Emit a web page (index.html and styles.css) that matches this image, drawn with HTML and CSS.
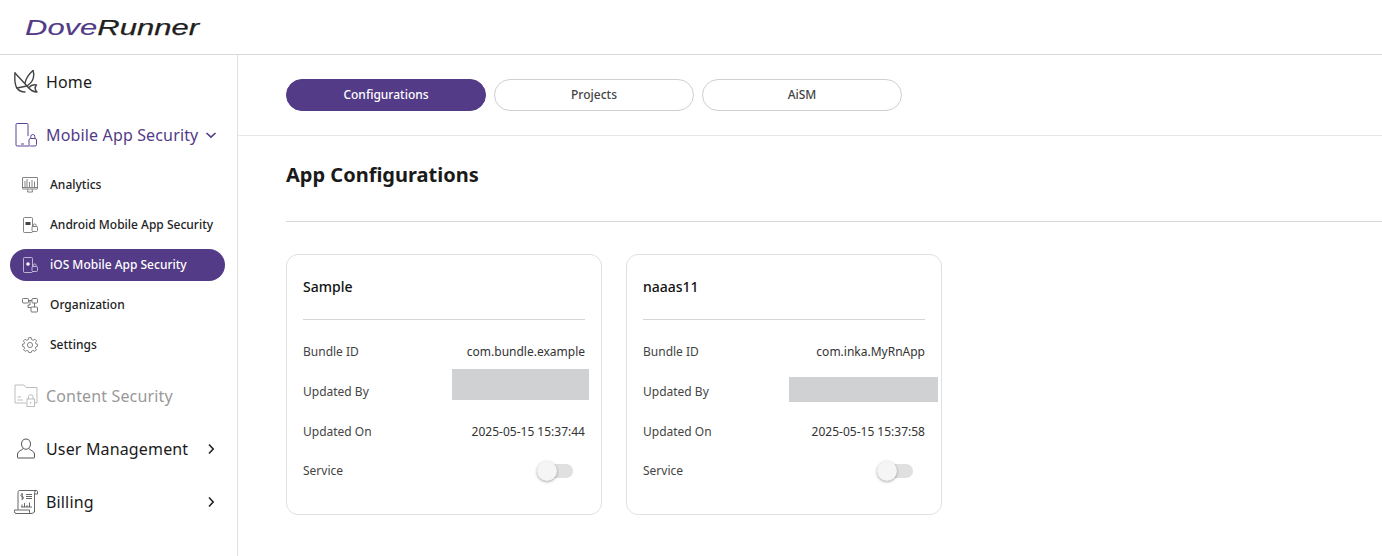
FILE: index.html
```html
<!DOCTYPE html>
<html lang="en">

<head>
  <meta charset="UTF-8" />
  <meta name="viewport" content="width=device-width, initial-scale=1.0" />
  <title>App Configurations</title>
  <link rel="stylesheet" href="styles.css">
</head>

<body>
  <header class="topbar">
    <svg class="logo" width="176" height="24" viewBox="0 0 176 24">
      <text x="0" y="19" textLength="174" lengthAdjust="spacingAndGlyphs" class="logo-text"><tspan class="logo-dove">Dove</tspan><tspan class="logo-runner">Runner</tspan></text>
    </svg>
  </header>

  <div class="layout">
    <nav class="sidebar">
      <a class="nav-item" href="javascript:;">
        <svg class="nav-icon" width="24" height="24" viewBox="0 0 24 24" fill="none" stroke="#444" stroke-width="1.4" stroke-linejoin="round" stroke-linecap="round">
          <path d="M1 3 C0.5 9 1 15 3 18 C5 21 8 22 11 22" />
          <path d="M1 3 L13 16" />
          <path d="M19 0.5 C15 4 12 8 11 13" />
          <path d="M19 0.5 C21 7 19 12 13 16 L3 18" />
          <path d="M13 16 C16 20 19 22 23 22 C21 20 20 18 22.5 15 C19 14 17 15 15 17.5" />
        </svg>
        <span>Home</span>
      </a>

      <a class="nav-item open" href="javascript:;">
        <svg class="nav-icon" width="24" height="24" viewBox="0 0 24 24" fill="none" stroke="#5d4596" stroke-width="1">
          <path d="M14 13 V1.5 Q14 0.5 13 0.5 H3 Q2 0.5 2 1.5 V22 Q2 23 3 23 H15" />
          <path d="M7 21 H10" />
          <rect x="15" y="15.5" width="7.5" height="7.5" rx="1.5" />
          <path d="M16.8 15.5 V13.5 A2 2 0 0 1 20.8 13.5 V15.5" />
        </svg>
        <span>Mobile App Security</span>
        <svg class="chevron" width="12" height="12" viewBox="0 0 12 12" fill="none" stroke="#533b87" stroke-width="1.6"><path d="M1.5 4 L6 8.2 L10.5 4" /></svg>
      </a>

      <ul class="sub-nav">
        <li>
          <a class="sub-item" href="javascript:;">
            <svg width="16" height="16" viewBox="0 0 16 16" fill="none" stroke="#666" stroke-width="0.8">
              <rect x="0.5" y="0.5" width="15" height="11.5" rx="0.5" />
              <path d="M3 10 V4 M5 10 V2 M7.5 10 V5 M10 10 V3 M12.5 10 V4.5 M0.5 10.5 H15.5 M6 12 L5.5 15 H10.5 L10 12" />
            </svg>
            Analytics
          </a>
        </li>
        <li>
          <a class="sub-item" href="javascript:;">
            <svg width="16" height="16" viewBox="0 0 16 16" fill="none" stroke="#666" stroke-width="0.8">
              <rect x="1.5" y="0.5" width="9" height="15" rx="1" />
              <rect x="3.5" y="5" width="5" height="3" fill="#444" stroke="none" />
              <rect x="10" y="9.5" width="5.5" height="5" rx="1" fill="#fff" />
              <path d="M11.3 9.5 V8.3 A1.4 1.4 0 0 1 14.1 8.3 V9.5" />
            </svg>
            Android Mobile App Security
          </a>
        </li>
        <li>
          <a class="sub-item active" href="javascript:;">
            <svg width="16" height="16" viewBox="0 0 16 16" fill="none" stroke="#d8d2e6" stroke-width="0.8">
              <rect x="1.5" y="0.5" width="9" height="15" rx="1" />
              <circle cx="6" cy="7" r="1.8" fill="#fff" stroke="none" />
              <rect x="10" y="9.5" width="5.5" height="5" rx="1" fill="#533b87" />
              <path d="M11.3 9.5 V8.3 A1.4 1.4 0 0 1 14.1 8.3 V9.5" />
            </svg>
            iOS Mobile App Security
          </a>
        </li>
        <li>
          <a class="sub-item" href="javascript:;">
            <svg width="16" height="16" viewBox="0 0 16 16" fill="none" stroke="#666" stroke-width="0.9">
              <rect x="0.5" y="1.5" width="6" height="4.5" rx="0.8" />
              <rect x="10" y="1.5" width="5.5" height="4.5" rx="0.8" />
              <rect x="9" y="10" width="6.5" height="5" rx="0.8" />
              <path d="M6.5 3.5 H10 M8 3.5 V8 H6 V10.5 H9 M12.5 6 V10" />
            </svg>
            Organization
          </a>
        </li>
        <li>
          <a class="sub-item" href="javascript:;">
            <svg width="16" height="16" viewBox="0 0 16 16" fill="none" stroke="#666" stroke-width="0.8" stroke-linejoin="round">
              <circle cx="8" cy="8" r="2.6" />
              <path d="M6.8 0.6 H9.2 L9.6 2.6 L11.2 3.3 L12.9 2.2 L14.6 3.9 L13.5 5.6 L14.1 7.1 L15.6 7.2 V9.2 L14 9.7 L13.4 11.1 L14.4 12.8 L12.8 14.4 L11.1 13.4 L9.7 14 L9.2 15.6 H6.8 L6.3 14 L4.9 13.4 L3.2 14.4 L1.6 12.8 L2.6 11.1 L2 9.7 L0.4 9.2 V7.2 L1.9 7.1 L2.5 5.6 L1.4 3.9 L3.1 2.2 L4.8 3.3 L6.4 2.6 Z" />
            </svg>
            Settings
          </a>
        </li>
      </ul>

      <a class="nav-item disabled" href="javascript:;">
        <svg class="nav-icon" width="24" height="24" viewBox="0 0 24 24" fill="none" stroke="#b5b5b5" stroke-width="0.9">
          <path d="M12 19 H1 V1 H10 L12 3.5 H23 V19 H21" />
          <path d="M3.5 13 H7 M3.5 16 H9" />
          <rect x="13" y="15" width="7.5" height="7.5" fill="#fff" />
          <path d="M14.5 15 V12.5 A2.3 2.3 0 0 1 19 12.5 V15 M16.7 18 V20" />
        </svg>
        <span>Content Security</span>
      </a>

      <a class="nav-item" href="javascript:;">
        <svg class="nav-icon" width="24" height="24" viewBox="0 0 24 24" fill="none" stroke="#555" stroke-width="1">
          <path d="M12 2 C9 2 7.5 4.2 7.5 7 C7.5 10 9.5 12.3 12 12.3 C14.5 12.3 16.5 10 16.5 7 C16.5 4.2 15 2 12 2 Z" />
          <path d="M9.2 11.5 C8 13.5 4 13.5 3.5 17 V20.5 Q3.5 21 4 21 H20 Q20.5 21 20.5 20.5 V17 C20 13.5 16 13.5 14.8 11.5" />
        </svg>
        <span>User Management</span>
        <svg class="chevron" width="12" height="12" viewBox="0 0 12 12" fill="none" stroke="#222" stroke-width="1.6"><path d="M4 1.5 L8.2 6 L4 10.5" /></svg>
      </a>

      <a class="nav-item" href="javascript:;">
        <svg class="nav-icon" width="24" height="24" viewBox="0 0 24 24" fill="none" stroke="#555" stroke-width="0.9">
          <path d="M4 19.5 V2.5 C4 1.5 4.5 0.5 5.5 0.5 H22 C20.5 0.5 20.5 3.5 20.5 5 V22" />
          <path d="M20.5 4 H23.5 V1.5 Q23.5 0.5 22 0.5" />
          <path d="M0.5 20 H15.5 V22.5 Q15.5 23.5 17 23.5 H2 Q0.5 23.5 0.5 21.5 Z M17 23.5 Q20.5 23.5 20.5 21" />
          <path d="M8.5 4 C6.5 4 6.5 6.5 8.2 6.5 C10 6.5 10 9 8 9 M8.2 3 V10 M12 4.5 H18 M12 6.5 H18 M12 8.5 H18" />
          <path d="M7 17 H18 M8 17 V14.5 M10.5 17 V13 M13 17 V15 M15.5 17 V12.5" />
        </svg>
        <span>Billing</span>
        <svg class="chevron" width="12" height="12" viewBox="0 0 12 12" fill="none" stroke="#222" stroke-width="1.6"><path d="M4 1.5 L8.2 6 L4 10.5" /></svg>
      </a>
    </nav>

    <main class="content">
      <div class="tabs">
        <a class="tab active" href="javascript:;">Configurations</a>
        <a class="tab" href="javascript:;">Projects</a>
        <a class="tab" href="javascript:;">AiSM</a>
      </div>

      <div class="page-head">
        <h1>App Configurations</h1>
      </div>

      <div class="cards">
        <section class="card">
          <h2>Sample</h2>
          <dl>
            <div class="row"><dt>Bundle ID</dt><dd>com.bundle.example</dd></div>
            <div class="row"><dt>Updated By</dt><dd></dd></div>
            <div class="row"><dt>Updated On</dt><dd>2025-05-15 15:37:44</dd></div>
            <div class="row row-service"><dt>Service</dt><dd><span class="switch"></span></dd></div>
          </dl>
          <div class="redact redact-a"></div>
        </section>

        <section class="card">
          <h2>naaas11</h2>
          <dl>
            <div class="row"><dt>Bundle ID</dt><dd>com.inka.MyRnApp</dd></div>
            <div class="row"><dt>Updated By</dt><dd></dd></div>
            <div class="row"><dt>Updated On</dt><dd>2025-05-15 15:37:58</dd></div>
            <div class="row row-service"><dt>Service</dt><dd><span class="switch"></span></dd></div>
          </dl>
          <div class="redact redact-b"></div>
        </section>
      </div>
    </main>
  </div>
</body>

</html>
```

FILE: styles.css
```css
* {
  margin: 0;
  padding: 0;
  box-sizing: border-box;
}

html,
body {
  height: 100%;
  overflow: hidden;
}

body {
  font-family: "Noto Sans", "Liberation Sans", sans-serif;
  color: #1a1a1a;
  background: #fff;
}

a {
  text-decoration: none;
  color: inherit;
}

.topbar {
  height: 55px;
  padding-left: 25px;
  display: flex;
  align-items: center;
  border-bottom: 1px solid #d9d9d9;
}

.logo {
  margin-top: 2px;
}

.logo-text {
  font-family: "Liberation Sans", sans-serif;
  font-style: italic;
  font-size: 22px;
}

.logo-dove {
  fill: #533b87;
  stroke: #533b87;
  stroke-width: 0.1px;
}

.logo-runner {
  fill: #1f1f1f;
  stroke: #1f1f1f;
  stroke-width: 0.25px;
}

.layout {
  display: flex;
  height: calc(100% - 55px);
}

.sidebar {
  width: 238px;
  flex-shrink: 0;
  border-right: 1px solid #e0e0e0;
}

.nav-item {
  height: 53px;
  padding: 0 20px 0 14px;
  display: flex;
  align-items: center;
  gap: 8px;
  font-size: 16px;
  letter-spacing: 0.15px;
  white-space: nowrap;
}

.nav-item.open {
  color: #533b87;
}

.nav-item.disabled {
  color: #999;
}

.nav-icon {
  flex-shrink: 0;
}

.chevron {
  margin-left: auto;
  flex-shrink: 0;
}

.nav-item.open .chevron {
  margin-left: -1px;
}

.sub-nav {
  list-style: none;
  padding: 4px 0;
}

.sub-nav li {
  padding: 4px 0 4px 10px;
}

.sub-item {
  width: 215px;
  height: 32px;
  padding: 0 0 1px 12px;
  display: flex;
  align-items: center;
  gap: 12px;
  border-radius: 16px;
  font-size: 12px;
  font-weight: 500;
  color: #222;
}

.sub-item.active {
  background: #533b87;
  color: #fff;
}

.content {
  flex: 1;
  min-width: 0;
}

.tabs {
  padding: 24px 48px;
  display: flex;
  gap: 8px;
  border-bottom: 1px solid #e6e6e6;
}

.tab {
  width: 200px;
  height: 32px;
  line-height: 30px;
  text-align: center;
  border: 1px solid #d0d0d0;
  border-radius: 16px;
  font-size: 12px;
  font-weight: 500;
  color: #444;
}

.tab.active {
  background: #533b87;
  border-color: #533b87;
  color: #fff;
}

.page-head {
  margin-left: 48px;
  padding: 25px 0 32px;
  border-bottom: 1px solid #d6d6d6;
}

.page-head h1 {
  font-size: 20px;
  line-height: 28px;
  font-weight: 700;
}

.cards {
  margin: 32px 0 0 48px;
  display: flex;
  gap: 24px;
}

.card {
  position: relative;
  width: 316px;
  height: 261px;
  padding: 16px;
  border: 1px solid #e0e0e0;
  border-radius: 12px;
}

.card h2 {
  height: 49px;
  line-height: 32px;
  font-size: 14px;
  font-weight: 500;
  color: #111;
  border-bottom: 1px solid #d6d6d6;
}

.card dl {
  padding-top: 11px;
}

.row {
  height: 40px;
  display: flex;
  align-items: center;
  justify-content: space-between;
  font-size: 12px;
}

.row dt {
  color: #444;
}

.row dd {
  color: #333;
}

.row-service dt {
  margin-top: -2px;
}

.switch {
  position: relative;
  display: block;
  width: 36px;
  height: 14px;
  margin-right: 12px;
  background: #e0e0e0;
  border-radius: 7px;
}

.switch::before {
  content: "";
  position: absolute;
  left: 0;
  top: -3px;
  width: 20px;
  height: 20px;
  background: #f5f5f5;
  border-radius: 50%;
  box-shadow: 0 1px 3px rgba(0, 0, 0, 0.35);
}

/* grey boxes that cover the account names */
.redact {
  position: absolute;
  background: #d0d1d3;
}

.redact-a {
  left: 165px;
  top: 114px;
  width: 137px;
  height: 31px;
}

.redact-b {
  left: 162px;
  top: 122px;
  width: 149px;
  height: 25px;
}
```
